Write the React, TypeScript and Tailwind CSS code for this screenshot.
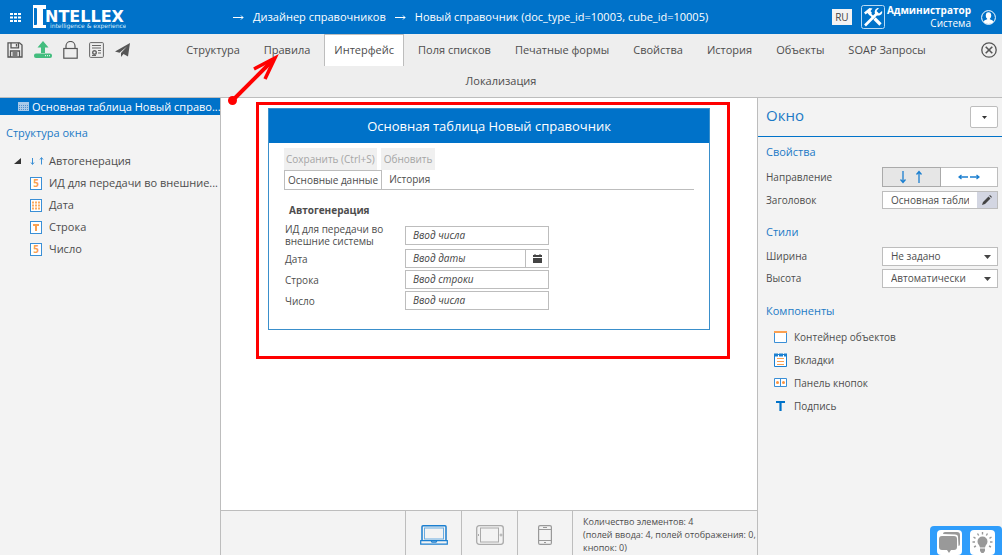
import { useState } from "react";
import type { ReactNode } from "react";

const TABS = [
  "Структура",
  "Правила",
  "Интерфейс",
  "Поля списков",
  "Печатные формы",
  "Свойства",
  "История",
  "Объекты",
  "SOAP Запросы",
];

const Logo = () => (
  <svg width="94" height="26" viewBox="0 0 94 26" aria-label="Intellex">
    <path d="M1 1h13v4h-3v16h3v3H1v-4h3V5H1z" fill="#fff" />
    <path d="M1.5 4.500h3v16h-3" fill="none" stroke="#0072c9" />
    <path d="M1 1.500h13M1.500 1v23M1 23.500h13" fill="none" stroke="#fff" />
    <text x="13" y="18" fill="#fff" fontSize="16" fontWeight="700" fontFamily="DejaVu Sans, sans-serif">NTELLEX</text>
    <text x="18" y="24" fill="#d5e8f7" fontSize="6" fontFamily="DejaVu Sans, sans-serif">intelligence &amp; experience</text>
  </svg>
);

const ToolsIcon = () => (
  <svg width="24" height="24" viewBox="0 0 24 24" fill="none">
    <rect x=".5" y=".5" width="23" height="23" rx="2" stroke="#b9daf4" />
    <path d="M4 20.500 16.500 8" stroke="#fff" strokeWidth="2.600" />
    <path d="M21 6 18 8.500 15.500 6 18 3C15.500 2.500 13 5 14 8.500L16 10.500C19.500 11 22 8.500 21 6z" fill="#fff" />
    <path d="M3 7.500 8.500 3l3 .5L9.500 6l1.500 2-2.500 2.500L6.500 8 4.500 9.500z" fill="#fff" />
    <path d="m9 9 4 4" stroke="#fff" strokeWidth="2" />
    <path d="m13.500 13.500 6 6" stroke="#fff" strokeWidth="3.200" />
  </svg>
);

const UserIcon = () => (
  <svg width="15" height="15" viewBox="0 0 15 15">
    <circle cx="7.500" cy="7.500" r="6.900" fill="none" stroke="#fff" />
    <ellipse cx="7.500" cy="5.600" rx="2.700" ry="3.400" fill="#fff" />
    <path d="M2.500 12c.5-1.800 2-2 3.700-2.700V8h2.600v1.300c1.700.7 3.200.9 3.700 2.700-2 2.600-8 2.600-10 0z" fill="#fff" />
  </svg>
);

const SaveIcon = () => (
  <svg width="16" height="16" viewBox="0 0 16 16" fill="none" stroke="#555" strokeWidth="1.300">
    <path d="M1 .8h11.500L15 3v12H1z" />
    <path d="M4 .8v5h7.500v-5M9.500 2v2.500M3.500 15V9h9v6M5.500 11h5M5.500 13h5" />
  </svg>
);

const UploadIcon = () => (
  <svg width="18" height="18" viewBox="0 0 18 18" fill="#43bd7e">
    <path d="M9 0 14.500 6.500H11V12H7V6.500H3.500z" />
    <rect x="0" y="12.500" width="18" height="4.500" rx="2" />
    <path d="M11 14.700h1M13 14.700h1M15 14.700h1" stroke="#fff" />
  </svg>
);

const LockIcon = () => (
  <svg width="15" height="18" viewBox="0 0 15 18" fill="none" stroke="#555" strokeWidth="1.200">
    <rect x=".8" y="7.500" width="13.400" height="9.700" />
    <path d="M3 7.500V5a4.500 4.500 0 0 1 9 0v2.500" />
  </svg>
);

const FormIcon = () => (
  <svg width="15" height="16" viewBox="0 0 15 16" fill="none" stroke="#666">
    <rect x=".6" y=".6" width="13.800" height="14.800" rx="1" />
    <path d="M3 3.500h9M3 6h9M9 8.500h3M9 11h3" />
    <circle cx="5.500" cy="10.500" r="1.800" strokeWidth="1.400" />
    <path d="M3 13.500h4" />
  </svg>
);

const PlaneIcon = () => (
  <svg width="15" height="14" viewBox="0 0 15 14" fill="#555">
    <path d="M15 0 0 8.500l4.500 1.200L12 3.500 6 10v4l2.500-3 4.500 2.500z" />
  </svg>
);

const CloseIcon = () => (
  <svg width="16" height="16" viewBox="0 0 16 16" fill="none" stroke="#555" strokeWidth="1.300">
    <circle cx="8" cy="8" r="7.200" />
    <path d="m4.700 4.700 6.600 6.600M11.300 4.700l-6.600 6.600" strokeWidth="1.600" />
  </svg>
);

const TypeIcon = ({ kind }: { kind: string }) => {
  if (kind === "group") {
    return (
      <svg width="14" height="12" viewBox="0 0 14 12" fill="none" stroke="#3a8fd6">
        <path d="M2.500 3v6M1 7.500 2.500 9.500 4 7.500M11.500 9.500V3M10 4.500l1.500-2 1.500 2" />
      </svg>
    );
  }
  return (
    <svg width="12" height="13" viewBox="0 0 12 13">
      <rect x=".5" y=".5" width="11" height="12" fill="#fff" stroke="#3a8fd6" />
      {kind === "date" && (
        <path d="M2 3.500h8M2 6.500h8M2 9.500h8" stroke="#fbab60" strokeWidth="2" strokeDasharray="2 1" />
      )}
      {kind === "number" && (
        <text x="6" y="10" textAnchor="middle" fontSize="10" fontWeight="700" fill="#fba050" fontFamily="Open Sans, sans-serif">5</text>
      )}
      {kind === "text" && <path d="M3 4h6M6 3.500v6.500" stroke="#fba050" strokeWidth="2" />}
    </svg>
  );
};

const TREE = [
  { kind: "group", label: "Автогенерация" },
  { kind: "number", label: "ИД для передачи во внешние..." },
  { kind: "date", label: "Дата" },
  { kind: "text", label: "Строка" },
  { kind: "number", label: "Число" },
];

const Sidebar = () => (
  <aside className="w-[221px] shrink-0 border-r border-[#bdbdbd] bg-[#f3f3f3]">
    <div className="flex h-[17px] items-center bg-[#0072c9] pl-[18px] text-white">
      <svg className="mr-[3px] shrink-0" width="11" height="9" viewBox="0 0 11 9">
        <rect width="11" height="9" fill="#a9c9e8" />
        <path d="M1 3.500h9M1 5.500h9M1 7.500h9" stroke="#4f8fcb" strokeDasharray="1 1" />
      </svg>
      <span className="text-[11px] leading-[17px] whitespace-nowrap">Основная таблица Новый справо...</span>
    </div>
    <h2 className="mt-[9px] mb-[9px] pl-[6px] text-[11px] leading-[17px] text-[#1b7ac6]">Структура окна</h2>
    <ul>
      {TREE.map((node) => (
        <li key={node.label} className="flex h-[22px] items-center pl-[14px]">
          <span className="w-4 shrink-0">
            {node.kind === "group" && (
              <svg width="7" height="6" viewBox="0 0 7 6">
                <path d="M7 0v6H0z" fill="#333" />
              </svg>
            )}
          </span>
          <span className="w-[19px] shrink-0">
            <TypeIcon kind={node.kind} />
          </span>
          <span className="text-[11px] whitespace-nowrap">{node.label}</span>
        </li>
      ))}
    </ul>
  </aside>
);

const Field = ({ id, label, placeholder, date }: { id: string; label: string; placeholder: string; date?: boolean }) => (
  <div className="flex items-center">
    <label htmlFor={id} className="w-[120px] shrink-0 pr-4 text-[10px] leading-[12px]">
      {label}
    </label>
    <div className="flex h-[19px] w-36 border border-[#bdbdbd] bg-white">
      <input id={id} placeholder={placeholder} className="w-full min-w-0 px-[7px] text-[10px] italic outline-none placeholder:text-[#444]" />
      {date && (
        <button type="button" aria-label="Календарь" className="flex w-[23px] shrink-0 items-center justify-center border-l border-[#bdbdbd]">
          <svg width="9" height="9" viewBox="0 0 9 9" fill="#444">
            <path d="M0 1h1.500V0h1v1h4V0h1v1H9v2H0zM0 4h9v5H0z" />
          </svg>
        </button>
      )}
    </div>
  </div>
);

const Preview = () => (
  <section className="relative mx-[47px] mt-[10px] border border-[#3a8fcb] bg-white">
    <h1 className="bg-[#0072c9] text-center text-[13px] leading-[34px] text-white">Основная таблица Новый справочник</h1>
    <div className="px-[15px] pt-[5px] pb-[19px]">
      <div className="flex gap-1 text-[10px] text-[#a5a5a5]">
        <button type="button" className="h-[22px] bg-[#f0f0f0] px-[2px]">Сохранить (Ctrl+S)</button>
        <button type="button" className="h-[22px] bg-[#f0f0f0] px-[3px]">Обновить</button>
      </div>
      <div className="flex border-b border-[#bdbdbd] text-[10px]">
        <button type="button" className="h-[19px] border border-b-0 border-[#bdbdbd] px-[3px]">Основные данные</button>
        <button type="button" className="h-[19px] px-[7px]">История</button>
      </div>
      <h3 className="mt-3 pl-[5px] text-[10px] leading-[16px] font-bold">Автогенерация</h3>
      <div className="mt-[5px] flex flex-col gap-[2px] pl-px">
        <Field id="ext" label="ИД для передачи во внешние системы" placeholder="Ввод числа" />
        <Field id="date" label="Дата" placeholder="Ввод даты" date />
        <Field id="line" label="Строка" placeholder="Ввод строки" />
        <Field id="num" label="Число" placeholder="Ввод числа" />
      </div>
    </div>
    <div className="pointer-events-none absolute -top-[7px] -right-[21px] -bottom-[30px] -left-[13px] border-3 border-[#f00]" />
  </section>
);

const DeviceBar = () => (
  <div className="flex h-[45px] border-t border-[#bdbdbd] bg-[#f3f3f3]">
    <div className="flex-1" />
    <button type="button" aria-label="Ноутбук" className="flex w-14 items-center justify-center border-l border-[#bdbdbd]">
      <svg className="mt-1" width="28" height="20" viewBox="0 0 28 20" fill="none" stroke="#1b7fd0">
        <rect x="2" y=".8" width="24" height="15" rx="1" strokeWidth="1.500" />
        <rect x="4.500" y="3" width="19" height="11" stroke="#69abe0" />
        <path d="M.7 15.700h10.300l1 1.500h4l1-1.500h10.300v3.500H.7z" fill="#f3f3f3" strokeWidth="1.200" />
      </svg>
    </button>
    <button type="button" aria-label="Планшет" className="flex w-14 items-center justify-center border-l border-[#bdbdbd]">
      <svg className="mt-1" width="28" height="20" viewBox="0 0 28 20" fill="none" stroke="#aaa">
        <rect x=".7" y=".7" width="26.600" height="18.600" rx="2.500" strokeWidth="1.300" />
        <rect x="4.500" y="3" width="18" height="14" />
        <circle cx="25" cy="10" r="1" />
        <path d="M2.500 9v2" />
      </svg>
    </button>
    <button type="button" aria-label="Телефон" className="flex w-[55px] items-center justify-center border-l border-[#bdbdbd]">
      <svg className="mt-1" width="14" height="20" viewBox="0 0 14 20" fill="none" stroke="#999">
        <rect x=".6" y=".6" width="12.800" height="18.800" rx="1.500" strokeWidth="1.200" />
        <path d="M1 4.500h12M1 15.500h12" />
        <path d="M5 2.500h4M6 17.500h2" />
      </svg>
    </button>
    <div className="w-[185px] border-l border-[#bdbdbd] pt-1 pl-[10px] text-[9px] leading-[13px] whitespace-nowrap">
      Количество элементов: 4
      <br />
      (полей ввода: 4, полей отображения: 0,
      <br />
      кнопок: 0)
    </div>
  </div>
);

const PropSelect = ({ id, label, value }: { id: string; label: string; value: string }) => (
  <div className="flex h-[19px] items-center justify-between">
    <label htmlFor={id}>{label}</label>
    <div className="relative flex h-[19px] w-[116px] border border-[#bdbdbd] bg-white">
      <select id={id} className="w-full appearance-none pl-2 outline-none">
        <option>{value}</option>
      </select>
      <svg className="pointer-events-none absolute top-[7px] right-[6px]" width="7" height="4" viewBox="0 0 7 4">
        <path d="M0 0h7L3.500 4z" fill="#444" />
      </svg>
    </div>
  </div>
);

const ComponentItem = ({ icon, label }: { icon: ReactNode; label: string }) => (
  <li className="flex h-[22px] items-center gap-[6px]">
    <svg width="14" height="14" viewBox="0 0 14 14" fill="none">
      {icon}
    </svg>
    {label}
  </li>
);

const Properties = () => {
  const [title, setTitle] = useState("Основная таблица Новый справочник");

  return (
    <aside className="w-[245px] shrink-0 border-l border-[#bdbdbd] bg-[#f3f3f3] text-[10px]">
      <div className="flex h-[39px] items-center justify-between border-b border-[#0072c9] pr-1 pl-2">
        <h2 className="pb-1 text-[15px] text-[#1b7ac6]">Окно</h2>
        <button type="button" aria-label="Меню" className="flex h-[22px] w-7 items-center justify-center rounded-xs border border-[#bdbdbd] bg-white">
          <svg width="5" height="3" viewBox="0 0 5 3">
            <path d="M0 0h5L2.500 3z" fill="#333" />
          </svg>
        </button>
      </div>
      <div className="pr-1 pl-2">
        <h3 className="mt-[6px] text-[11px] leading-[17px] text-[#1b7ac6]">Свойства</h3>
        <div className="mt-[7px] flex h-5 items-center justify-between">
          <span>Направление</span>
          <div className="flex h-5 w-[116px]">
            <button type="button" aria-label="Вертикально" className="flex flex-1 items-center justify-center border border-[#aaa] bg-[#e6e6e6]">
              <svg width="22" height="14" viewBox="0 0 22 14" fill="none" stroke="#1b7fd0" strokeWidth="1.300">
                <path d="M3 1v11M.5 9.500 3 12.500 5.500 9.500M19 13V2M16.500 4.500 19 1.500 21.500 4.500" />
              </svg>
            </button>
            <button type="button" aria-label="Горизонтально" className="flex flex-1 items-center justify-center border border-l-0 border-[#bdbdbd] bg-white">
              <svg width="22" height="6" viewBox="0 0 22 6" fill="none" stroke="#1b7fd0" strokeWidth="1.300">
                <path d="M1 3h9M3.500 1 1 3l2.500 2M12 3h9M18.500 1 21 3l-2.500 2" />
              </svg>
            </button>
          </div>
        </div>
        <div className="mt-1 flex h-[18px] items-center justify-between">
          <label htmlFor="title">Заголовок</label>
          <div className="flex h-[18px] w-[116px] border border-[#bdbdbd] bg-white">
            <div className="flex min-w-0 flex-1 px-2">
              <input id="title" value={title} onChange={(e) => setTitle(e.target.value)} className="w-full min-w-0 outline-none" />
            </div>
            <button type="button" aria-label="Изменить" className="flex w-5 items-center justify-center bg-[#d3d6e2]">
              <svg width="10" height="10" viewBox="0 0 10 10" fill="#444">
                <path d="m0 10 1-3 5.500-5.500 2 2L3 9zM7.200.8 8 0l2 2-.8.800z" />
              </svg>
            </button>
          </div>
        </div>
        <h3 className="mt-[14px] mb-[7px] text-[11px] leading-[17px] text-[#1b7ac6]">Стили</h3>
        <div className="flex flex-col gap-[3px]">
          <PropSelect id="width" label="Ширина" value="Не задано" />
          <PropSelect id="height" label="Высота" value="Автоматически" />
        </div>
        <h3 className="mt-[14px] text-[11px] leading-[17px] text-[#1b7ac6]">Компоненты</h3>
        <ul className="mt-[7px] flex flex-col gap-px pl-2">
          <ComponentItem
            label="Контейнер объектов"
            icon={
              <>
                <path d="M.5 2v10.500h12V2" fill="#fff" stroke="#3a8fd6" />
                <path d="M0 2h13" stroke="#fba050" strokeWidth="2" />
              </>
            }
          />
          <ComponentItem
            label="Вкладки"
            icon={
              <>
                <path d="M.5 1.500h12v12H.5z" fill="#fff" stroke="#1b7fd0" />
                <path d="M0 2h13" stroke="#1b7fd0" strokeWidth="3" strokeDasharray="4 1" />
                <path d="M3 5.500h7M3 8.500h7M3 11.500h7" stroke="#fba050" />
              </>
            }
          />
          <ComponentItem
            label="Панель кнопок"
            icon={
              <>
                <path d="M.5 2.500h12v8H.5zM6.500 2.500v8" fill="#fff" stroke="#3a8fd6" />
                <circle cx="3.500" cy="6.500" r="1.500" fill="#fb9440" />
                <circle cx="9.500" cy="6.500" r="1.500" fill="#fb9440" />
              </>
            }
          />
          <ComponentItem label="Подпись" icon={<path d="M2 3h9M6.500 3v9" stroke="#0072c9" strokeWidth="2.200" />} />
        </ul>
      </div>
    </aside>
  );
};

const Crumb = ({ children }: { children: ReactNode }) => (
  <>
    <svg className="shrink-0" width="11" height="5" viewBox="0 0 11 5" fill="none" stroke="#fff">
      <path d="M0 2.500h10M8 .5l2 2-2 2" />
    </svg>
    <a href="#" className="whitespace-nowrap">{children}</a>
  </>
);

const App = () => {
  const [active, setActive] = useState("Интерфейс");

  return (
    <div className="relative flex min-h-screen flex-col bg-white font-['Open_Sans',sans-serif] text-[#4d4d4d]">
      <header className="flex h-[34px] shrink-0 items-center bg-[#0072c9] pr-[6px] pl-[10px] text-white">
        <svg width="11" height="9" viewBox="0 0 11 9">
          <path d="M0 1h11M0 4.500h11M0 8h11" stroke="#fff" strokeWidth="2" strokeDasharray="3 1" />
        </svg>
        <a href="#" className="ml-[11px]">
          <Logo />
        </a>
        <nav className="ml-[107px] flex flex-1 items-center gap-[9px] text-[11px] font-medium">
          <Crumb>Дизайнер справочников</Crumb>
          <Crumb>Новый справочник (doc_type_id=10003, cube_id=10005)</Crumb>
        </nav>
        <button type="button" className="mr-[9px] h-4 w-5 bg-[#f3f3f3] text-[10px] leading-[16px] text-[#444]">RU</button>
        <ToolsIcon />
        <div className="mr-[10px] ml-[2px] text-right text-[10px] leading-[13px]">
          <div className="font-bold">Администратор</div>
          <div>Система</div>
        </div>
        <UserIcon />
      </header>

      <div className="h-16 shrink-0 border-b border-[#bdbdbd] bg-[#eee]">
        <div className="flex h-8">
          <div className="flex w-[140px] shrink-0 items-center gap-[11px] pl-[7px]">
            <SaveIcon />
            <UploadIcon />
            <LockIcon />
            <FormIcon />
            <PlaneIcon />
          </div>
          <nav className="flex flex-1 justify-center gap-1 text-[11px]">
            {TABS.map((tab) => (
              <button
                key={tab}
                type="button"
                onClick={() => setActive(tab)}
                className={`border border-b-0 px-[9px] whitespace-nowrap ${tab === active ? "border-[#bdbdbd] bg-white" : "border-transparent"}`}
              >
                {tab}
              </button>
            ))}
          </nav>
          <button type="button" aria-label="Закрыть" className="flex w-[30px] shrink-0 items-center pl-[9px]">
            <CloseIcon />
          </button>
        </div>
        <div className="flex h-[31px] justify-center text-[11px]">
          <button type="button" className="px-[9px]">Локализация</button>
        </div>
      </div>

      <div className="flex flex-1">
        <Sidebar />
        <main className="flex min-w-0 flex-1 flex-col justify-between">
          <Preview />
          <DeviceBar />
        </main>
        <Properties />
      </div>

      <svg className="pointer-events-none absolute top-[54px] left-[226px]" width="54" height="54" viewBox="0 0 54 54" fill="none" stroke="#f00" strokeWidth="4">
        <circle cx="6.500" cy="46.500" r="4.500" fill="#f00" stroke="none" />
        <path d="M6.500 46.500 47 6" />
        <path d="M28 15 49 4 39 25" strokeWidth="3.500" />
      </svg>

      <div className="fixed right-0 bottom-0 flex h-[29px] w-[72px] gap-2 rounded-t bg-[#2f9dfb] pt-1 pl-[7px]">
        <button type="button" aria-label="Чат" className="flex h-[25px] w-[25px] items-center justify-center rounded bg-white">
          <svg width="23" height="23" viewBox="0 0 23 23" fill="#999">
            <path d="M5 3q0-2 2-2h12q3 0 3 3v9q0 2-1.500 2L20 6q0-2.500-3-2.500z" />
            <path d="M4 5h12q3 0 3 3v8q0 3-3 3h-3l-2 3-2-3H4q-3 0-3-3V8q0-3 3-3z" />
          </svg>
        </button>
        <button type="button" aria-label="Подсказка" className="flex h-[25px] w-[25px] items-center justify-center rounded bg-white">
          <svg width="23" height="23" viewBox="0 0 23 23" fill="#999">
            <path d="M11.500 5.500a5 5 0 0 1 5 5c0 2.500-2 3.500-2.500 6H9c-.5-2.500-2.500-3.500-2.500-6a5 5 0 0 1 5-5zM9 17.500h5V20l-1.500 2h-2L9 20z" />
            <path d="M11.500 1v2.500M6.500 2.500l1.200 2M16.500 2.500l-1.200 2M2.500 6l2 1.300M20.500 6l-2 1.300M1.500 11H4M21.500 11H19M3 16l2-1M20 16l-2-1" stroke="#999" strokeWidth="1.400" />
          </svg>
        </button>
      </div>
    </div>
  );
};

export default App;
